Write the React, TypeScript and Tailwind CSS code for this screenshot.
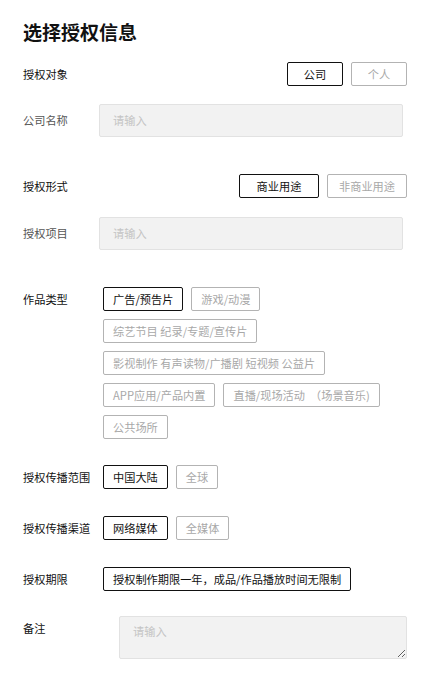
import React from "react";

const font = { fontFamily: '"Noto Sans CJK SC", "Noto Sans", sans-serif' };

function Chip({ label, active }: { label: string; active?: boolean }) {
  return (
    <div
      className={
        "h-[24px] px-[9px] flex items-center justify-center rounded-[2px] border text-[11.2px] whitespace-nowrap " +
        (active ? "border-[#111] text-[#111]" : "border-[#b3b3b3] text-[#a8a8a8]")
      }
    >
      {label}
    </div>
  );
}

function FixedBtn({ label, active, w }: { label: string; active?: boolean; w: string }) {
  return (
    <div
      className={
        "h-[24px] flex items-center justify-center rounded-[2px] border text-[11.2px] " +
        w +
        " " +
        (active ? "border-[#111] text-[#111]" : "border-[#b3b3b3] text-[#a8a8a8]")
      }
    >
      {label}
    </div>
  );
}

function Input() {
  return (
    <div className="flex-1 mr-[4px] h-[33px] bg-[#f2f2f2] border border-[#e2e2e2] rounded-[2px] flex items-center pl-[13px] text-[11.2px] text-[#c4c4c4]">
      请输入
    </div>
  );
}

export default function App() {
  return (
    <div className="bg-white w-[428px] min-h-[673px] pl-[23px] pr-[21px]" style={font}>
      <div className="pt-[19px] h-[45px] text-[19px] leading-[26px] font-bold text-[#111]">选择授权信息</div>

      <div className="mt-[17px] flex items-center justify-between">
        <div className="text-[11.2px] text-[#111]">授权对象</div>
        <div className="flex gap-[8px]">
          <FixedBtn label="公司" active w="w-[56px]" />
          <FixedBtn label="个人" w="w-[56px]" />
        </div>
      </div>

      <div className="mt-[18px] flex items-center">
        <div className="w-[76px] text-[11.2px] text-[#555]">公司名称</div>
        <Input />
      </div>

      <div className="mt-[37px] flex items-center justify-between">
        <div className="text-[11.2px] text-[#111]">授权形式</div>
        <div className="flex gap-[8px]">
          <FixedBtn label="商业用途" active w="w-[80px]" />
          <FixedBtn label="非商业用途" w="w-[80px]" />
        </div>
      </div>

      <div className="mt-[19px] flex items-center">
        <div className="w-[76px] text-[11.2px] text-[#555]">授权项目</div>
        <Input />
      </div>

      <div className="mt-[37px] flex items-start">
        <div className="w-[80px] shrink-0 text-[11.2px] leading-[24px] text-[#111]">作品类型</div>
        <div className="flex flex-col gap-[8px]">
          <div className="flex gap-[8px]">
            <Chip label="广告/预告片" active />
            <Chip label="游戏/动漫" />
          </div>
          <div className="flex gap-[8px]">
            <Chip label="综艺节目 纪录/专题/宣传片" />
          </div>
          <div className="flex gap-[8px]">
            <Chip label="影视制作 有声读物/广播剧 短视频 公益片" />
          </div>
          <div className="flex gap-[8px]">
            <Chip label="APP应用/产品内置" />
            <Chip label={"直播/现场活动\u00a0\u00a0（场景音乐)"} />
          </div>
          <div className="flex gap-[8px]">
            <Chip label="公共场所" />
          </div>
        </div>
      </div>

      <div className="mt-[26px] flex items-center">
        <div className="w-[80px] text-[11.2px] text-[#111]">授权传播范围</div>
        <div className="flex gap-[8px]">
          <Chip label="中国大陆" active />
          <Chip label="全球" />
        </div>
      </div>

      <div className="mt-[27px] flex items-center">
        <div className="w-[80px] text-[11.2px] text-[#111]">授权传播渠道</div>
        <div className="flex gap-[8px]">
          <Chip label="网络媒体" active />
          <Chip label="全媒体" />
        </div>
      </div>

      <div className="mt-[27px] flex items-center">
        <div className="w-[80px] text-[11.2px] text-[#111]">授权期限</div>
        <Chip label="授权制作期限一年，成品/作品播放时间无限制" active />
      </div>

      <div className="mt-[25px] flex items-start">
        <div className="w-[96px] shrink-0 pt-[4px] text-[11.2px] leading-[16px] text-[#111]">备注</div>
        <textarea
          placeholder="请输入"
          className="block flex-1 h-[43px] bg-[#f2f2f2] border border-[#e2e2e2] rounded-[2px] pl-[13px] pt-[6px] text-[11.2px] leading-[16px] placeholder:text-[#c4c4c4] outline-none"
          style={font}
        />
      </div>
    </div>
  );
}
